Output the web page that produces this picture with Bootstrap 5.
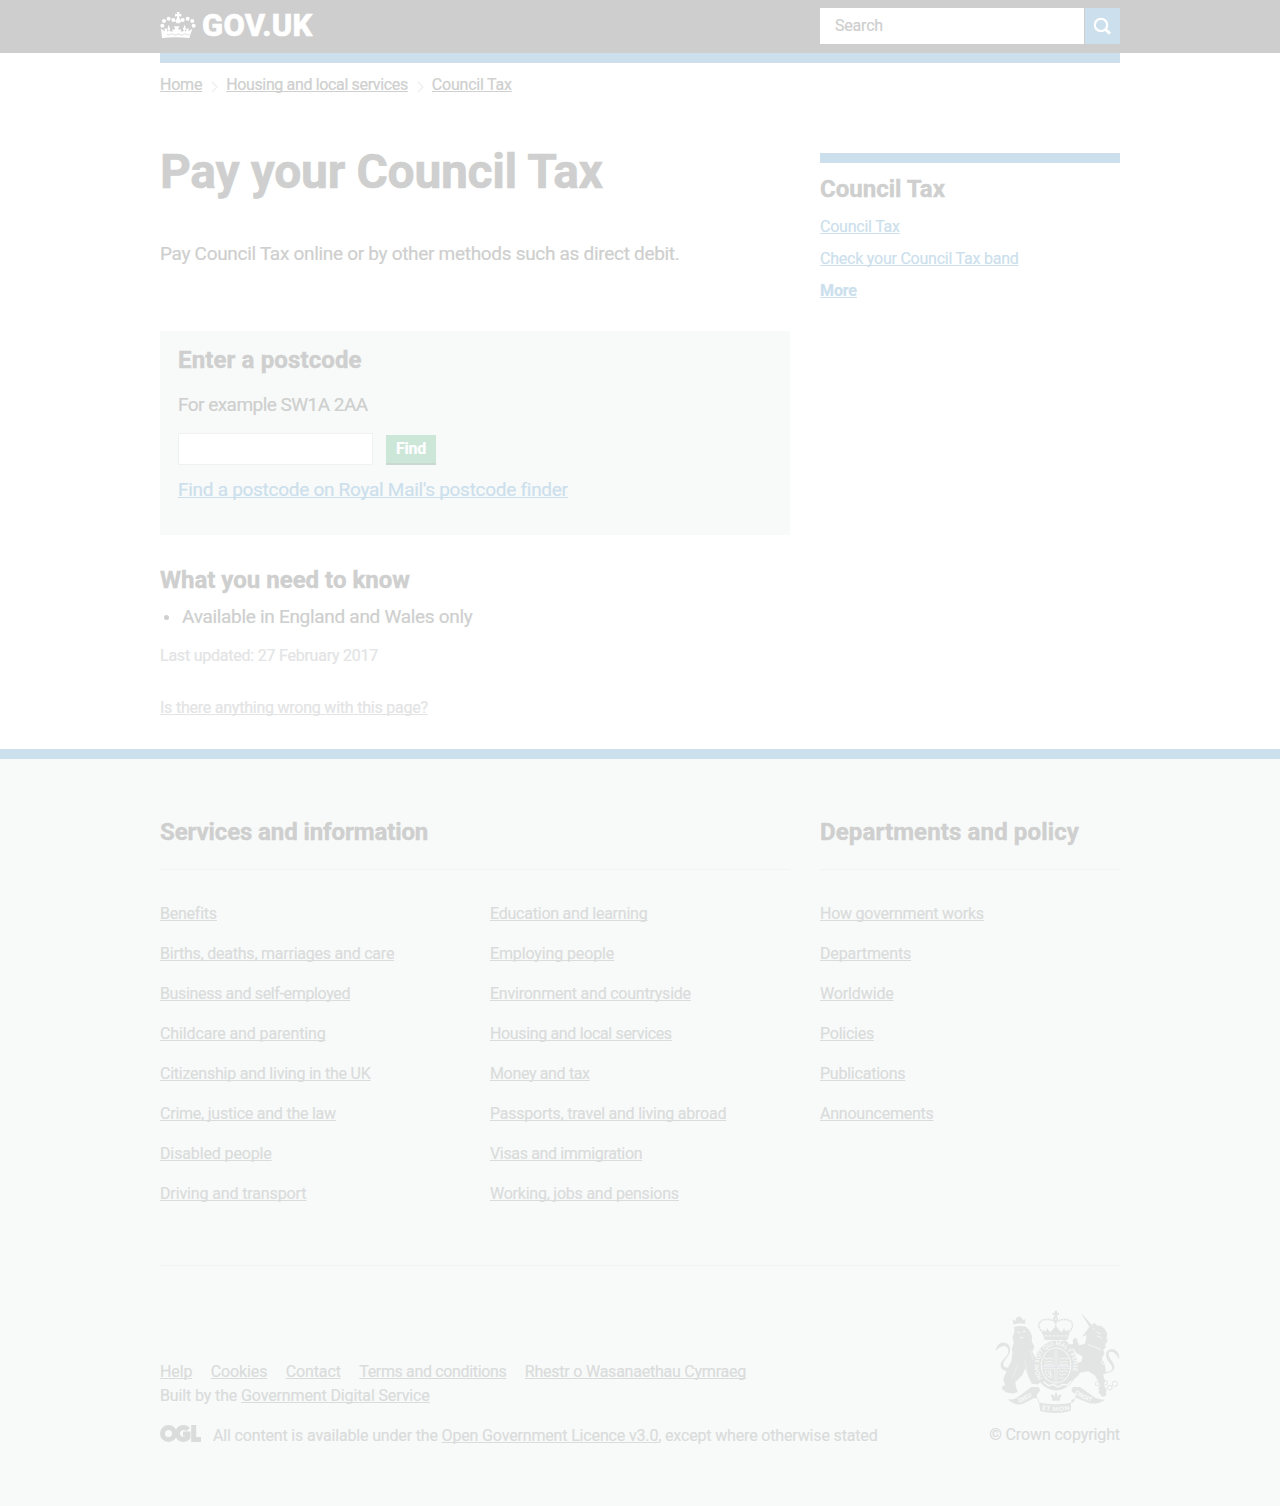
<!DOCTYPE html>
<html lang="en">
<head>
<meta charset="utf-8">
<meta name="viewport" content="width=device-width, initial-scale=1">
<title>Pay your Council Tax - GOV.UK</title>
<link href="https://cdn.jsdelivr.net/npm/bootstrap@5.3.0/dist/css/bootstrap.min.css" rel="stylesheet">
<style>
body{font-family:Roboto,"Liberation Sans",sans-serif;font-size:16px;line-height:20px;letter-spacing:-.23px;color:#cecfce;background:#fff;-webkit-text-stroke:.2px currentColor}
a{color:inherit;text-decoration:underline;text-decoration-skip-ink:none;text-decoration-thickness:1px;text-underline-offset:1px}
a:hover{color:inherit}
.wrap{max-width:990px;padding:0 15px}
.wrap .row{--bs-gutter-x:30px}
.tight{letter-spacing:-.35px}
.loose{letter-spacing:-.13px}
.site-head{background:#cecece;height:53px}
.logo-word{color:#fff;font-size:31px;font-weight:800;line-height:36px;letter-spacing:.3px;margin-left:6px;text-decoration:none;-webkit-text-stroke:.6px #fff}
.search-box{width:300px;height:36px}
.search-box .form-control{border:0;border-radius:0;font:inherit;letter-spacing:-.2px;padding:0 15px;color:#cecfce}
.search-box .form-control::placeholder{color:#cecfce;opacity:1}
.search-box .btn{width:36px;border-radius:0;background:#cbdfec;border:0;border-left:1px solid #cecece}
.search-box .btn svg{margin-right:2px}
.blue-bar{height:10px;background:#cbdfec}
.blue{color:#ccdfed}
.crumbs{padding-top:12px}
.crumbs svg{margin:3px 7.2px 0 7.8px}
h1{font-size:48px;line-height:50px;font-weight:700;margin:52px 0 0;letter-spacing:-.32px;-webkit-text-stroke:.6px currentColor}
h2{font-size:24px;line-height:30px;font-weight:700;margin:0;letter-spacing:0;-webkit-text-stroke:.4px currentColor}
.wide{letter-spacing:.13px}
.narrow{letter-spacing:-.1px}
.txt{font-size:19px;line-height:25px;margin:0;letter-spacing:-.3px}
.intro{margin-top:44px}
.example{letter-spacing:-.53px;margin-top:17px}
.royal{letter-spacing:-.28px}
.postcode{background:#f8faf9;height:204px;margin-top:65px;padding:14px 18px}
.postcode-row{margin:16px 0 12px;gap:13px}
.postcode .form-control{width:195px;height:32px;border:1px solid #f0f1f1;border-radius:0}
.find{width:50px;height:30px;border:0;border-radius:0;border-bottom:2px solid #c9d8d0;background:#cce7d8;color:#fff;font-weight:700;line-height:20px;padding:0;letter-spacing:-.3px}
.find:hover{background:#cce7d8;color:#fff}
.know-title{margin-top:30px}
.know{margin:9px 0 17px}
.know li::before{content:"";width:5px;height:5px;border-radius:50%;background:#cecfce;margin:1px 13px 0 4px}
.pale{color:#e3e4e5}
.wrong{margin-top:32px}
.related{margin-top:58px}
.related h2{margin-top:11px}
.related ul{margin-top:13px;row-gap:12px}
.site-foot{border-top:10px solid #cbdfec;background:#f8faf9;color:#dadcdc;margin-top:31px;height:757px;padding-top:58px}
.site-foot h2{color:#cecfce}
.foot-rule{border-bottom:1px solid #f2f3f3;padding-bottom:22px;margin-bottom:34px}
.link-list{row-gap:20px}
.meta{border-top:1px solid #f2f3f3;margin-top:61px;padding-top:44px}
.meta-text{padding-top:52px}
.meta-links{column-gap:18.5px}
.licence{margin-top:20px;column-gap:12px}
.licence svg{margin-top:-1px}
.licence span{letter-spacing:-.16px}
.copy{margin-top:12px;letter-spacing:-.1px}
.crest,.logo-crown{-webkit-text-stroke:0}
.logo-crown{margin-top:4px}
</style>
</head>
<body>
<header class="site-head">
  <div class="container wrap d-flex justify-content-between pt-2">
    <a class="d-flex align-items-start text-decoration-none" href="#">
      <svg class="logo-crown" width="36" height="27" viewBox="0 0 108 81" fill="#fff">
        <path d="M50 0h9l-2 7 7-2v9l-7-2 2 9 5 6-5 7h-9l-5-7 5-6 2-9-7 2V5l7 2z"/>
        <circle cx="40" cy="24" r="6"/><circle cx="68" cy="24" r="6"/><circle cx="26" cy="20" r="6"/><circle cx="83" cy="20" r="6"/><circle cx="12" cy="27" r="6"/><circle cx="97" cy="27" r="6"/><circle cx="7" cy="41" r="6"/><circle cx="101" cy="41" r="6"/>
        <path d="M3 50l12 8-2-9 8 2 1 8 4-3-4-5 4-13 5 13-3 6 10 2-1-8 6 3 2-5-4-6h18l-4 6 2 5 6-3-1 8 10-2-3-6 5-13 4 13-4 5 4 3 1-8 8-2-2 9 12-8-9 28q-41-4-82 0z"/>
        <path d="M21 66l6 3 8-4 10 5 10-4 10 4 10-5 8 4 6-3" fill="none" stroke="#cecece" stroke-width="2"/>
      </svg>
      <span class="logo-word">GOV.UK</span>
    </a>
    <form class="search-box d-flex">
      <input class="form-control" type="text" placeholder="Search" aria-label="Search">
      <button class="btn p-0 d-flex align-items-center justify-content-center flex-shrink-0" type="button" aria-label="Search">
        <svg width="18" height="18" viewBox="0 0 18 18" fill="none" stroke="#fff" stroke-width="2.2"><circle cx="8" cy="8" r="6.2"/><path d="M12 12l5 4.6" stroke-width="3"/></svg>
      </button>
    </form>
  </div>
</header>
<main class="container wrap">
  <div class="blue-bar"></div>
  <nav class="crumbs d-flex align-items-center">
    <a href="#">Home</a>
    <svg width="9" height="12" viewBox="0 0 9 12" fill="none" stroke="#edeeee" stroke-width="1.3"><path d="M2 1l5 5-5 5"/></svg>
    <a class="tight" href="#">Housing and local services</a>
    <svg width="9" height="12" viewBox="0 0 9 12" fill="none" stroke="#edeeee" stroke-width="1.3"><path d="M2 1l5 5-5 5"/></svg>
    <a href="#">Council Tax</a>
  </nav>
  <div class="row">
    <div class="col-8">
      <h1>Pay your Council Tax</h1>
      <p class="txt intro">Pay Council Tax online or by other methods such as direct debit.</p>
      <section class="postcode">
        <h2 class="wide">Enter a postcode</h2>
        <p class="txt example">For example SW1A 2AA</p>
        <div class="postcode-row d-flex align-items-end">
          <input class="form-control" type="text" aria-label="Postcode">
          <button class="btn find" type="button">Find</button>
        </div>
        <p class="txt royal"><a class="blue" href="#">Find a postcode on Royal Mail's postcode finder</a></p>
      </section>
      <h2 class="know-title">What you need to know</h2>
      <ul class="know list-unstyled txt"><li class="d-flex align-items-center">Available in England and Wales only</li></ul>
      <p class="pale mb-0">Last updated: 27 February 2017</p>
      <p class="pale wrong mb-0"><a href="#">Is there anything wrong with this page?</a></p>
    </div>
    <aside class="col-4">
      <div class="related">
        <div class="blue-bar"></div>
        <h2>Council Tax</h2>
        <ul class="list-unstyled blue d-flex flex-column mb-0">
          <li><a href="#">Council Tax</a></li>
          <li><a href="#">Check your Council Tax band</a></li>
          <li><a class="fw-bold loose" href="#">More</a></li>
        </ul>
      </div>
    </aside>
  </div>
</main>
<footer class="site-foot">
  <div class="container wrap">
    <div class="row">
      <div class="col-8">
        <h2 class="foot-rule narrow">Services and information</h2>
        <div class="row">
          <ul class="col-6 list-unstyled link-list d-flex flex-column mb-0">
            <li><a href="#">Benefits</a></li>
            <li><a href="#">Births, deaths, marriages and care</a></li>
            <li><a class="tight" href="#">Business and self-employed</a></li>
            <li><a class="loose" href="#">Childcare and parenting</a></li>
            <li><a href="#">Citizenship and living in the UK</a></li>
            <li><a href="#">Crime, justice and the law</a></li>
            <li><a class="loose" href="#">Disabled people</a></li>
            <li><a class="loose" href="#">Driving and transport</a></li>
          </ul>
          <ul class="col-6 list-unstyled link-list d-flex flex-column mb-0">
            <li><a href="#">Education and learning</a></li>
            <li><a class="loose" href="#">Employing people</a></li>
            <li><a href="#">Environment and countryside</a></li>
            <li><a class="tight" href="#">Housing and local services</a></li>
            <li><a class="tight" href="#">Money and tax</a></li>
            <li><a href="#">Passports, travel and living abroad</a></li>
            <li><a class="tight" href="#">Visas and immigration</a></li>
            <li><a href="#">Working, jobs and pensions</a></li>
          </ul>
        </div>
      </div>
      <div class="col-4">
        <h2 class="foot-rule wide">Departments and policy</h2>
        <ul class="list-unstyled link-list d-flex flex-column mb-0">
          <li><a href="#">How government works</a></li>
          <li><a class="loose" href="#">Departments</a></li>
          <li><a class="loose" href="#">Worldwide</a></li>
          <li><a href="#">Policies</a></li>
          <li><a href="#">Publications</a></li>
          <li><a href="#">Announcements</a></li>
        </ul>
      </div>
    </div>
    <div class="meta d-flex justify-content-between">
      <div class="meta-text">
        <div class="meta-links d-flex">
          <a class="loose" href="#">Help</a><a class="loose" href="#">Cookies</a><a class="loose" href="#">Contact</a><a class="tight" href="#">Terms and conditions</a><a href="#">Rhestr o Wasanaethau Cymraeg</a>
        </div>
        <div class="loose mt-1">Built by the <a href="#">Government Digital Service</a></div>
        <div class="licence d-flex">
          <svg width="41" height="18" viewBox="0 0 41 18" fill="none" stroke="#dadcdc" stroke-width="5"><circle cx="8.5" cy="8.5" r="6"/><path d="M28 4.6A6 6 0 1 0 28 12.4V9h-5"/><path d="M33.7 0v14.5H41"/></svg>
          <span>All content is available under the <a href="#">Open Government Licence v3.0</a>, except where otherwise stated</span>
        </div>
      </div>
      <div class="d-flex flex-column align-items-end">
        <svg class="crest" width="125" height="103" viewBox="45 30 375 310" fill="#e3e5e5">
          <!-- lion -->
          <path d="M100 74l-3-16 8 5 4-10 8-4 8 4 4 8 7-4-1 15q-18-5-35 2zM101 82q14-7 36-2l11 12 8 16-1 16 8 16-6 16 12 24-2 24 6 26 12 14-12 10-18-2-10-22-10-24-8 20-22 22 4 18 4 10-12 6-22-4-14-10 2-10 8 0-6-20 14-34 10-18 4-26-2-14 6-18-4-16 6-18-2-14z"/>
          <path d="M112 96l8 3M128 96l8-2M120 112l10 2" fill="none" stroke="#f8faf9" stroke-width="3"/>
          <path d="M112 196l-16 40M134 180l8 42M150 150l10 32" fill="none" stroke="#f0f2f2" stroke-width="2"/>
          <path d="M92 212q-20 4-26-4-12-14 4-30 22-20 12-34-6-8-18-4-10 4-18 14 4-22 20-26 20 0 24 16 2 16-12 32-14 16-6 24 6 6 20 4z"/>
          <!-- royal crown -->
          <path d="M224 32h7v6h6v6h-6v8h-7v-8h-6v-6h6z"/>
          <g fill="none" stroke="#e3e5e5" stroke-width="5"><circle cx="227" cy="57" r="5"/><path d="M190 100q-24-24-6-38 24-10 43 6 20-16 43-6 18 14-6 38M227 66v28" stroke-dasharray="7 2"/></g>
          <path d="M188 102l2-14 6 8 6-12 6 12 8-4 8-10h8l6 10 8 4 6-12 6 12 6-8 4 14-6 18h-68z"/>
          <path d="M194 108h68" stroke="#f8faf9" stroke-width="3" stroke-dasharray="8 4"/>
          <!-- unicorn -->
          <path d="M303 38l34 38-8 6z"/>
          <path d="M310 106l16-22 14-12 4-4 6 8 14 2 12 10 6 14-2 12 4 8-8 12 2 8-8 8 4 10-8 16 8 14 4 22-8 14 6 18-4 14 8 10-2 20-10 4-12-14 4-24-14-26-20-14-24 4-12 14-16 12-10 12-12-4 4-8 10-4 14-36 10-14 14-4 4-16-18-10-10-14-10 2-14-4-6-10-4-10 8-4 10 8 4 6 12-2-2-10 6-8 8 2 0 8 6 12 16-4 4-12 2-14-14 4z"/>
          <path d="M372 222q28-2 32-18 0-12-12-26-10-14-2-22 14-4 28 22 2-24-18-30-18-2-22 14 0 16 12 28 12 16 4 22-8 6-22 2z"/>
          <path d="M322 122l8 8 8-6 7 8 9-4 11 6-4 17-44-15z"/>
          <path d="M324 134l40 15M338 86l6 3M350 96l12 6M352 108l14 6" fill="none" stroke="#f8faf9" stroke-width="2.5"/>
          <g fill="none" stroke="#e3e5e5" stroke-width="3"><circle cx="352" cy="252" r="6"/><circle cx="364" cy="265" r="7"/><circle cx="376" cy="249" r="7"/><circle cx="390" cy="264" r="7"/><circle cx="405" cy="252" r="8"/></g>
          <circle cx="372" cy="187" r="6" fill="none" stroke="#f8faf9" stroke-width="3"/>
          <!-- garter and shield -->
          <ellipse cx="228" cy="197" rx="65" ry="75"/>
          <ellipse cx="228" cy="197" rx="46" ry="54" fill="#f8faf9"/>
          <ellipse cx="228" cy="197" rx="43" ry="51"/>
          <path d="M228 152v96M186 202h84" stroke="#f8faf9" stroke-width="8"/><path d="M228 152v96M186 202h84" stroke="#dfe1e5" stroke-width="4"/>
          <g fill="none" stroke="#f8faf9" stroke-width="2.5"><path d="M193 174l8 4 8-4 10 4M193 184l8 4 8-4 10 4M193 193l8 3 8-3 10 3M238 174l8 4 8-4 10 4M238 184l8 4 8-4 10 4M238 193l8 3 8-3 10 3M196 210q-2 20 20 24M204 210q0 14 14 20M212 210v16M238 212l8 4 8-4 10 4M238 222l8 4 8-4 4 2M238 232l8 4 4-2"/><path d="M190 246l16 12 14-4 14 8 14-8 14 2 12-12" stroke-width="4"/></g>
          <path id="ring" d="M187 236A52 61 0 1 1 269 236" fill="none"/>
          <text font-family="Lato,sans-serif" font-weight="700" font-size="18" letter-spacing="0" fill="#f8faf9"><textPath href="#ring" textLength="232" lengthAdjust="spacingAndGlyphs">HONI SOIT QUI MAL Y PENSE</textPath></text>
          <!-- motto scroll -->
          <path d="M82 298q14 4 28-4l44-32 22 0 4 10-10 14 4 22q54 12 108 0l6-22-14-12 4-12 22 0 46 32q14 6 30 6-24 16-50 10l-38-16-14 8-2 32q-44 12-92 0l-4-34-12-6-38 20q-26 4-44-16z"/>
          <path d="M204 278h50v26q-25 4-50 0z" fill="#f8faf9"/>
          <path d="M216 303q2-9-5-17 9-5 14 6-2-9 3-15 6 6 4 15 5-11 13-6-6 8-5 17z"/>
          <path id="motto-left" d="M118 309q26-10 50-29" fill="none"/><path id="motto-right" d="M284 281q28 22 60 27" fill="none"/><path id="motto-mid" d="M186 330q42 8 84 0" fill="none"/>
          <g font-family="Lato,sans-serif" font-weight="900" font-size="18" letter-spacing="0" fill="#f8faf9"><text><textPath href="#motto-left">DIEU</textPath></text><text><textPath href="#motto-mid" textLength="83">ET MON</textPath></text><text><textPath href="#motto-right">DROIT</textPath></text></g>
        </svg>
        <span class="copy">© Crown copyright</span>
      </div>
    </div>
  </div>
</footer>
<script src="https://cdn.jsdelivr.net/npm/bootstrap@5.3.0/dist/js/bootstrap.bundle.min.js"></script>
</body>
</html>
